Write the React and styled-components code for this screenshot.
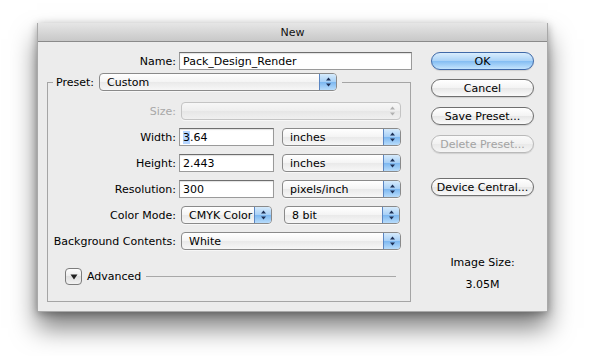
import React from 'react';
import styled, { createGlobalStyle, css } from 'styled-components';

const GlobalStyle = createGlobalStyle`
  html, body {
    margin: 0;
    padding: 0;
    background: #ffffff;
  }
  body {
    font-family: "DejaVu Sans", "Liberation Sans", sans-serif;
    font-size: 11px;
    color: #000;
  }
`;

const Page = styled.div`
  width: 600px;
  height: 356px;
  box-sizing: border-box;
  padding: 23px 0 0 37px;
  overflow: hidden;
`;

const Window = styled.div`
  width: 511px;
  height: 289px;
  box-sizing: border-box;
  display: flex;
  flex-direction: column;
  background: #ececec;
  border: 1px solid #a9a9a9;
  border-top: none;
  box-shadow: 0 16px 24px rgba(0, 0, 0, 0.5), 0 2px 8px rgba(0, 0, 0, 0.3);
`;

const TitleBar = styled.div`
  height: 19px;
  box-sizing: border-box;
  display: flex;
  align-items: center;
  justify-content: center;
  background: linear-gradient(#e6e6e6, #d4d4d4 60%, #c8c8c8);
  border-bottom: 1px solid #8a8a8a;
  color: #111;
  font-size: 11px;
`;

const Body = styled.div`
  flex: 1;
  display: flex;
`;

const Main = styled.div`
  width: 383px;
  padding-top: 10px;
`;

const Side = styled.div`
  flex: 1;
  display: flex;
  flex-direction: column;
  align-items: flex-start;
  padding: 10px 0 0 10px;
`;

const Row = styled.div`
  display: flex;
  align-items: center;
  height: 18px;
  margin-top: ${p => p.$gap || 0}px;
`;

const Label = styled.label`
  width: ${p => p.$width}px;
  flex: none;
  text-align: right;
  padding-right: 3px;
  box-sizing: border-box;
  color: ${p => (p.$disabled ? '#a8a8a8' : '#000')};
  white-space: nowrap;
`;

const TextField = styled.div`
  width: ${p => p.$width}px;
  height: 18px;
  box-sizing: border-box;
  flex: none;
  display: flex;
  align-items: center;
  padding-left: 3px;
  background: #fff;
  border: 1px solid #9a9a9a;
  border-top-color: #6e6e6e;
  box-shadow: inset 0 1px 1px rgba(0, 0, 0, 0.12);
  color: #000;
`;

const Selected = styled.span`
  background: #b5d5ff;
`;

const Group = styled.fieldset`
  width: 364px;
  box-sizing: border-box;
  margin: 3px 0 0 9px;
  padding: 11px 0 16px 0;
  border: 1px solid #a5a5a5;
  min-width: 0;
`;

const Legend = styled.legend`
  display: flex;
  align-items: center;
  height: 18px;
  margin-left: 5px;
  padding: 0 5px 0 3px;
`;

const LegendLabel = styled.span`
  margin-right: 5px;
`;

const PopupBox = styled.div`
  width: ${p => p.$width}px;
  height: 18px;
  box-sizing: border-box;
  flex: none;
  display: flex;
  margin-left: ${p => p.$offset || 0}px;
  border: 1px solid ${p => (p.$disabled ? '#c4c4c4' : '#8a8a8a')};
  border-radius: 4px;
  overflow: hidden;
  background: ${p =>
    p.$disabled
      ? 'linear-gradient(#f7f7f7, #eeeeee 50%, #e6e6e6 50%, #f0f0f0)'
      : 'linear-gradient(#ffffff, #f4f4f4 50%, #e9e9e9 50%, #f7f7f7)'};
  box-shadow: 0 1px 0 rgba(255, 255, 255, 0.6);
`;

const PopupText = styled.span`
  flex: 1;
  display: flex;
  align-items: center;
  padding-left: 7px;
  white-space: nowrap;
  overflow: hidden;
  color: #000;
`;

const ArrowCap = styled.span`
  width: 16px;
  flex: none;
  display: flex;
  align-items: center;
  justify-content: center;
  ${p =>
    p.$disabled
      ? css`
          background: transparent;
        `
      : css`
          background: linear-gradient(#d6ebfc, #a6cff6 50%, #7ab6f0 50%, #b8dcfb);
          border-left: 1px solid #5b86c2;
        `}
`;

const Arrows = ({ color }) => (
  <svg width="7" height="10" viewBox="0 0 7 10">
    <path d="M3.5 0.5 L6 3.5 L1 3.5 Z" fill={color} />
    <path d="M3.5 9.5 L6 6.5 L1 6.5 Z" fill={color} />
  </svg>
);

const Popup = ({ value, width, offset, disabled }) => (
  <PopupBox $width={width} $offset={offset} $disabled={disabled}>
    <PopupText>{value}</PopupText>
    <ArrowCap $disabled={disabled}>
      <Arrows color={disabled ? '#b0b0b0' : '#1c2f55'} />
    </ArrowCap>
  </PopupBox>
);

const Spacer = styled.span`
  width: ${p => p.$w}px;
  flex: none;
`;

const AdvancedRow = styled.div`
  display: flex;
  align-items: center;
  height: 17px;
  margin-top: 18px;
  padding: 0 14px 0 17px;
`;

const Disclosure = styled.span`
  width: 17px;
  height: 17px;
  box-sizing: border-box;
  flex: none;
  display: flex;
  align-items: center;
  justify-content: center;
  border: 1px solid #7c7c7c;
  border-radius: 4px;
  background: linear-gradient(#fdfdfd, #ececec 50%, #e0e0e0 50%, #f2f2f2);
`;

const AdvancedText = styled.span`
  margin: 0 5px;
  color: #000;
`;

const Rule = styled.span`
  flex: 1;
  height: 1px;
  background: #a8a8a8;
`;

const Button = styled.div`
  width: 103px;
  height: 18px;
  box-sizing: border-box;
  display: flex;
  align-items: center;
  justify-content: center;
  margin-top: ${p => p.$gap || 0}px;
  border-radius: 9px;
  border: 1px solid ${p => (p.$disabled ? '#b9b9b9' : p.$primary ? '#3f69a8' : '#6f6f6f')};
  color: ${p => (p.$disabled ? '#a3a3a3' : '#000')};
  background: ${p =>
    p.$primary
      ? 'linear-gradient(#d9edfd, #a9d2f7 50%, #82bcf2 50%, #c4e4fd)'
      : p.$disabled
      ? 'linear-gradient(#fafafa, #f1f1f1 50%, #e9e9e9 50%, #f5f5f5)'
      : 'linear-gradient(#ffffff, #f3f3f3 50%, #e6e6e6 50%, #fafafa)'};
  box-shadow: 0 1px 1px rgba(0, 0, 0, 0.12);
  white-space: nowrap;
`;

const SizeInfo = styled.div`
  width: 103px;
  margin-top: 60px;
  text-align: center;
  line-height: 14px;
  color: #000;
`;

const SizeValue = styled.div`
  margin-top: 8px;
`;

export default function App() {
  return (
    <Page>
      <GlobalStyle />
      <Window>
        <TitleBar>New</TitleBar>
        <Body>
          <Main>
            <Row>
              <Label $width={141}>Name:</Label>
              <TextField $width={233}>Pack_Design_Render</TextField>
            </Row>
            <Group>
              <Legend>
                <LegendLabel>Preset:</LegendLabel>
                <Popup value="Custom" width={238} />
              </Legend>
              <Row>
                <Label $width={131} $disabled>Size:</Label>
                <Popup value="" width={220} offset={2} disabled />
              </Row>
              <Row $gap={8}>
                <Label $width={131}>Width:</Label>
                <TextField $width={95}>
                  <Selected>3</Selected>.64
                </TextField>
                <Spacer $w={8} />
                <Popup value="inches" width={119} />
              </Row>
              <Row $gap={8}>
                <Label $width={131}>Height:</Label>
                <TextField $width={95}>2.443</TextField>
                <Spacer $w={8} />
                <Popup value="inches" width={119} />
              </Row>
              <Row $gap={8}>
                <Label $width={131}>Resolution:</Label>
                <TextField $width={95}>300</TextField>
                <Spacer $w={8} />
                <Popup value="pixels/inch" width={119} />
              </Row>
              <Row $gap={8}>
                <Label $width={131}>Color Mode:</Label>
                <Popup value="CMYK Color" width={91} offset={2} />
                <Spacer $w={12} />
                <Popup value="8 bit" width={116} />
              </Row>
              <Row $gap={8}>
                <Label $width={131}>Background Contents:</Label>
                <Popup value="White" width={220} offset={2} />
              </Row>
              <AdvancedRow>
                <Disclosure>
                  <svg width="8" height="6" viewBox="0 0 8 6">
                    <path d="M0.5 0.5 L7.5 0.5 L4 5.5 Z" fill="#222" />
                  </svg>
                </Disclosure>
                <AdvancedText>Advanced</AdvancedText>
                <Rule />
              </AdvancedRow>
            </Group>
          </Main>
          <Side>
            <Button $primary>OK</Button>
            <Button $gap={9}>Cancel</Button>
            <Button $gap={10}>Save Preset...</Button>
            <Button $gap={10} $disabled>Delete Preset...</Button>
            <Button $gap={25}>Device Central...</Button>
            <SizeInfo>
              Image Size:
              <SizeValue>3.05M</SizeValue>
            </SizeInfo>
          </Side>
        </Body>
      </Window>
    </Page>
  );
}
